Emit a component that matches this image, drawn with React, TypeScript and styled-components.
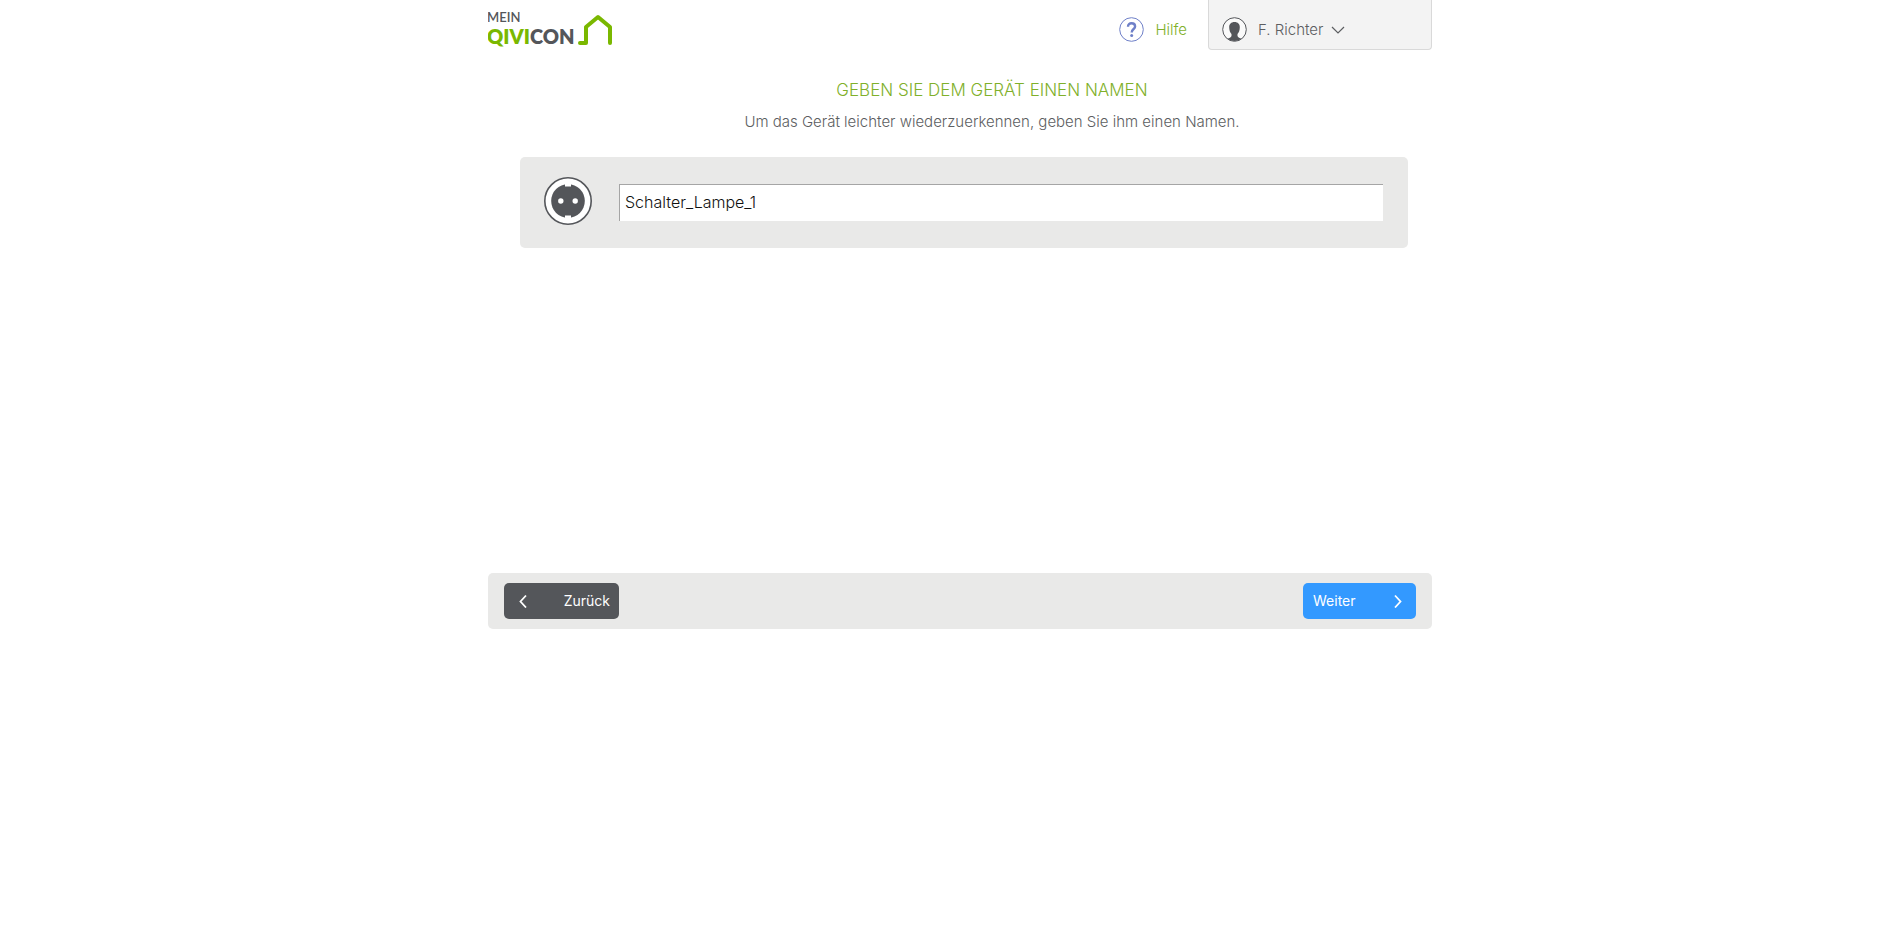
import React, { useState } from "react";
import styled, { createGlobalStyle } from "styled-components";

const colors = {
  green: "#7fb02a",
  logoGreen: "#7ab800",
  text: "#5c5e61",
  dark: "#54565a",
  panel: "#e9e9e8",
  blue: "#3399ff",
  help: "#6f80c8",
};

const GlobalStyle = createGlobalStyle`
  *, *::before, *::after { box-sizing: border-box; }
  body {
    margin: 0;
    background: #fff;
    color: ${colors.text};
    font: 300 15px/20px Inter, "Liberation Sans", sans-serif;
  }
`;

const Page = styled.div`
  max-width: 961px;
  margin: 0 auto;
  padding-left: 17px;
`;

const Header = styled.header`
  display: flex;
  align-items: flex-start;
  height: 50px;
`;

const LogoLink = styled.a`
  display: block;
  margin: 10px auto 0 0;

  svg {
    display: block;
  }
`;

const LogoText = styled.text<{ $size: number; $weight: number }>`
  font-family: Lato, "Liberation Sans", sans-serif;
  font-size: ${(p) => p.$size}px;
  font-weight: ${(p) => p.$weight};
`;

const HelpLink = styled.a`
  display: flex;
  align-items: center;
  gap: 11px;
  height: 59px;
  margin-right: 21px;
  color: ${colors.green};
  text-decoration: none;
`;

const AccountButton = styled.button`
  display: flex;
  align-items: center;
  width: 224px;
  height: 50px;
  padding: 10px 13px 0;
  border: 1px solid #d9d9d9;
  border-top: 0;
  border-radius: 0 0 4px 4px;
  background: #f3f3f3;
  color: ${colors.text};
  font: inherit;
  cursor: pointer;
`;

const AccountName = styled.span`
  margin: 0 8px 0 11px;
`;

const Main = styled.main`
  display: flex;
  flex-direction: column;
  min-height: 523px;
`;

const Intro = styled.div`
  padding: 28px 0 26px 64px;
  text-align: center;
`;

const Title = styled.h1`
  margin: 0 0 11px;
  color: ${colors.green};
  font-size: 17px;
  line-height: 24px;
  font-weight: 300;
  text-transform: uppercase;
`;

const Hint = styled.p`
  margin: 0;
  line-height: 18px;
`;

const DeviceCard = styled.section`
  display: flex;
  align-items: center;
  gap: 27px;
  height: 91px;
  margin: 0 24px 0 32px;
  padding: 0 25px 0 24px;
  border-radius: 5px;
  background: ${colors.panel};

  svg {
    flex: none;
    margin-bottom: 3px;
  }
`;

const NameInput = styled.input`
  flex: 1;
  min-width: 0;
  height: 37px;
  padding: 0 5px 3px;
  border: 0 solid #a5a5a5;
  border-width: 1px 0 0 1px;
  border-radius: 0;
  background: #fff;
  color: #111;
  font: inherit;
  font-size: 16px;
  outline: none;
`;

const ActionBar = styled.footer`
  display: flex;
  align-items: center;
  justify-content: space-between;
  height: 56px;
  padding: 0 16px;
  border-radius: 5px;
  background: ${colors.panel};
`;

const ActionButton = styled.button<{ $primary?: boolean }>`
  display: flex;
  align-items: center;
  justify-content: space-between;
  width: ${(p) => (p.$primary ? 113 : 115)}px;
  height: 36px;
  padding: ${(p) => (p.$primary ? "0 13px 0 10px" : "0 9px 0 14px")};
  border: 0;
  border-radius: 5px;
  background: ${(p) => (p.$primary ? colors.blue : colors.dark)};
  color: #fff;
  font: inherit;
  font-size: 14px;
  font-weight: 400;
  cursor: pointer;
`;

function Logo() {
  return (
    <svg width="126" height="38" viewBox="0 0 126 38" role="img" aria-label="Mein Qivicon">
      <LogoText x="-1" y="12" $size={13} $weight={600} fill={colors.dark}>MEIN</LogoText>
      <LogoText x="-1" y="34" $size={20} $weight={800} fill={colors.logoGreen}>
        QIVI<tspan fill={colors.dark}>CON</tspan>
      </LogoText>
      <path
        d="M92 33H98V17L110 7L122 17V33"
        fill="none"
        stroke={colors.logoGreen}
        strokeWidth="4"
        strokeLinecap="round"
        strokeLinejoin="round"
      />
    </svg>
  );
}

function HelpIcon() {
  return (
    <svg width="25" height="25" viewBox="0 0 25 25" aria-hidden="true">
      <circle cx="12.500" cy="12.500" r="11.800" fill="#fff" stroke={colors.help} />
      <path
        d="M9 9.800C9 7.400 10.500 6.300 12.500 6.300C14.600 6.300 16.100 7.400 16.100 9.500C16.100 12 12.700 12.100 12.700 15.500"
        fill="none"
        stroke={colors.help}
        strokeWidth="2.400"
      />
      <circle cx="12.700" cy="18.500" r="1.500" fill={colors.help} />
    </svg>
  );
}

function UserIcon() {
  return (
    <svg width="25" height="25" viewBox="0 0 25 25" aria-hidden="true">
      <circle cx="12.500" cy="12.500" r="11.800" fill="#fafafa" stroke={colors.dark} />
      <path
        d="M12.500 5C15.900 5 17.800 7.200 17.800 10.200C17.800 13 16.900 15.500 15.500 17V19C16 20.700 18 21 19.300 21.800C15.500 24.600 9.500 24.600 5.700 21.800C7 21 9 20.700 9.500 19V17C8.100 15.500 7.200 13 7.200 10.200C7.200 7.200 9.100 5 12.500 5Z"
        fill={colors.dark}
      />
    </svg>
  );
}

function SocketIcon() {
  return (
    <svg width="48" height="48" viewBox="0 0 48 48" aria-hidden="true">
      <circle cx="24" cy="24" r="23.200" fill="#fff" stroke={colors.dark} strokeWidth="1.600" />
      <circle cx="24" cy="24" r="16.800" fill={colors.dark} />
      <path d="M21 6H27V9.500H21ZM21 38.500H27V42H21Z" fill="#fff" />
      <circle cx="16.800" cy="24" r="2.700" fill="#fff" />
      <circle cx="31.200" cy="24" r="2.700" fill="#fff" />
    </svg>
  );
}

const chevrons = {
  down: { width: 14, height: 8, d: "M1 1L7 7L13 1", stroke: 1.2 },
  left: { width: 10, height: 14, d: "M8 1.500L2.500 7.500L8 13.500", stroke: 1.8 },
  right: { width: 10, height: 14, d: "M2 1.500L7.500 7.500L2 13.500", stroke: 1.8 },
};

function Chevron({ to }: { to: keyof typeof chevrons }) {
  const { width, height, d, stroke } = chevrons[to];
  return (
    <svg width={width} height={height} viewBox={`0 0 ${width} ${height}`} aria-hidden="true">
      <path d={d} fill="none" stroke="currentColor" strokeWidth={stroke} />
    </svg>
  );
}

export default function App() {
  const [name, setName] = useState("Schalter_Lampe_1");

  return (
    <Page>
      <GlobalStyle />
      <Header>
        <LogoLink href="#">
          <Logo />
        </LogoLink>
        <HelpLink href="#hilfe">
          <HelpIcon />
          Hilfe
        </HelpLink>
        <AccountButton type="button" aria-haspopup="menu">
          <UserIcon />
          <AccountName>F. Richter</AccountName>
          <Chevron to="down" />
        </AccountButton>
      </Header>
      <Main>
        <Intro>
          <Title id="device-name-title">Geben Sie dem Gerät einen Namen</Title>
          <Hint>Um das Gerät leichter wiederzuerkennen, geben Sie ihm einen Namen.</Hint>
        </Intro>
        <DeviceCard>
          <SocketIcon />
          <NameInput
            type="text"
            aria-labelledby="device-name-title"
            value={name}
            onChange={(e) => setName(e.target.value)}
          />
        </DeviceCard>
      </Main>
      <ActionBar>
        <ActionButton type="button">
          <Chevron to="left" />
          Zurück
        </ActionButton>
        <ActionButton type="button" $primary>
          Weiter
          <Chevron to="right" />
        </ActionButton>
      </ActionBar>
    </Page>
  );
}
